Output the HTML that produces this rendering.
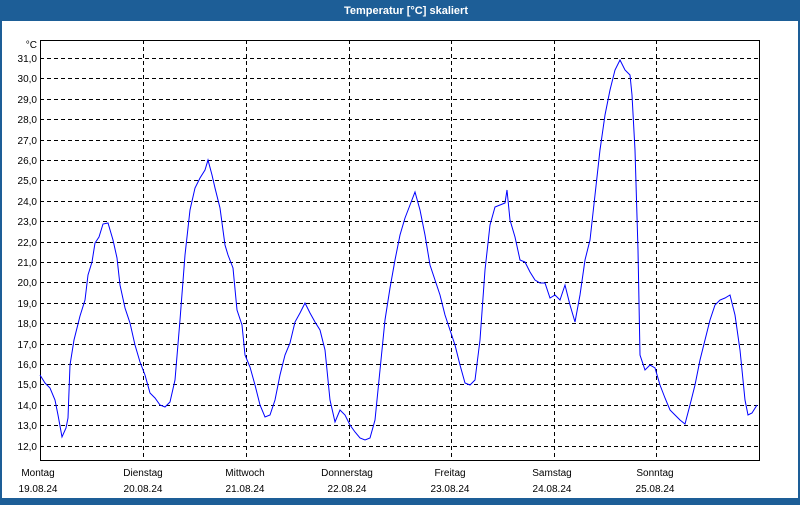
<!DOCTYPE html>
<html><head><meta charset="utf-8"><style>
body{margin:0;width:800px;height:500px;background:#1d5e97;font-family:"Liberation Sans",sans-serif;overflow:hidden}
</style></head><body>
<svg width="800" height="500" xmlns="http://www.w3.org/2000/svg" font-family="Liberation Sans, sans-serif" font-size="10">
<rect x="0" y="0" width="800" height="500" fill="#1d5e97"/>
<rect x="2" y="21" width="796" height="477" fill="#fff"/>
<text x="406" y="14" fill="#fff" font-weight="bold" font-size="11" text-anchor="middle">Temperatur [°C] skaliert</text>
<g stroke="#000" stroke-width="1" stroke-dasharray="4,3">
<path d="M143.5 40V460M246.5 40V460M349.5 40V460M451.5 40V460M554.5 40V460M656.5 40V460"/>
<path d="M40 58.5H760M40 78.5H760M40 99.5H760M40 119.5H760M40 140.5H760M40 160.5H760M40 180.5H760M40 201.5H760M40 221.5H760M40 242.5H760M40 262.5H760M40 282.5H760M40 303.5H760M40 323.5H760M40 344.5H760M40 364.5H760M40 384.5H760M40 405.5H760M40 425.5H760M40 446.5H760"/>
</g>
<rect x="40.5" y="40.5" width="719" height="420" fill="none" stroke="#000"/>
<g text-anchor="end" fill="#000">
<text x="37" y="48">°C</text>
<text x="37" y="62">31,0</text><text x="37" y="82">30,0</text><text x="37" y="103">29,0</text><text x="37" y="123">28,0</text><text x="37" y="144">27,0</text><text x="37" y="164">26,0</text><text x="37" y="184">25,0</text><text x="37" y="205">24,0</text><text x="37" y="225">23,0</text><text x="37" y="246">22,0</text><text x="37" y="266">21,0</text><text x="37" y="286">20,0</text><text x="37" y="307">19,0</text><text x="37" y="327">18,0</text><text x="37" y="348">17,0</text><text x="37" y="368">16,0</text><text x="37" y="388">15,0</text><text x="37" y="409">14,0</text><text x="37" y="429">13,0</text><text x="37" y="450">12,0</text>
</g>
<g text-anchor="middle" fill="#000">
<text x="38" y="476">Montag</text><text x="38" y="492">19.08.24</text>
<text x="143" y="476">Dienstag</text><text x="143" y="492">20.08.24</text>
<text x="245" y="476">Mittwoch</text><text x="245" y="492">21.08.24</text>
<text x="347" y="476">Donnerstag</text><text x="347" y="492">22.08.24</text>
<text x="450" y="476">Freitag</text><text x="450" y="492">23.08.24</text>
<text x="552" y="476">Samstag</text><text x="552" y="492">24.08.24</text>
<text x="655" y="476">Sonntag</text><text x="655" y="492">25.08.24</text>
</g>
<polyline fill="none" stroke="#0000ff" stroke-width="1" points="40,375 45,383 50,388 55,400 58,415 62,437 66,428 68,418 70,365 74,340 80,316 85,300 88,275 92,262 95,243 99,237 103,224 108,223 113,240 117,258 120,285 125,308 130,323 135,345 140,362 145,375 150,393 155,398 160,405 165,407 170,402 175,380 180,320 185,255 190,210 195,188 200,178 205,170 208,160 212,175 215,188 220,208 225,245 228,255 233,268 237,310 242,325 245,355 250,367 255,385 260,405 265,417 270,415 275,400 280,375 285,355 290,343 295,322 300,313 305,303 310,313 315,322 320,330 325,350 330,400 335,422 340,410 345,415 350,425 355,432 360,438 365,440 370,438 375,420 380,370 385,320 390,288 395,260 400,235 405,218 410,205 415,192 420,210 425,235 430,265 435,280 440,295 445,315 450,330 455,345 460,365 465,383 470,385 475,380 480,340 485,270 490,225 495,207 500,205 505,203 507,190 510,220 515,237 520,260 525,262 530,272 535,280 540,283 545,283 550,298 555,295 560,300 565,285 570,305 575,322 580,295 585,260 590,240 595,195 600,150 605,115 610,90 615,70 620,60 625,70 630,75 632,95 635,150 638,250 640,355 645,370 650,365 655,368 660,385 665,398 670,410 675,415 680,420 685,424 690,405 695,385 700,360 705,340 710,320 715,305 720,300 725,298 730,295 735,315 740,350 745,400 748,415 752,413 757,405"/>
</svg>
</body></html>
